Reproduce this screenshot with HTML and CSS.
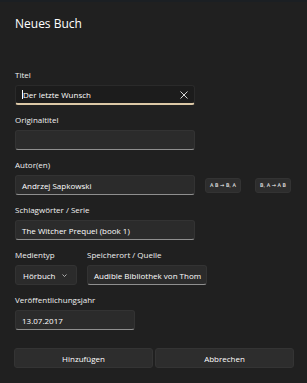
FILE: index.html
```html
<!DOCTYPE html>
<html lang="de">
<head>
    <meta charset="UTF-8">
    <meta name="viewport" content="width=device-width, initial-scale=1.0">
    <title>Neues Buch</title>
    <link rel="stylesheet" href="styles.css">
</head>
<body>

    <div class="dialog">
        <h1>Neues Buch</h1>

        <!-- Eingabefelder -->
        <div class="field first">
            <label>Titel</label>
            <div class="box focused wide">
                <span class="caret"></span>
                <span class="value">Der letzte Wunsch</span>
                <svg class="clear" width="8" height="8" viewBox="0 0 8 8">
                    <path d="M0.5 0.5 L7.5 7.5 M7.5 0.5 L0.5 7.5" stroke="#d6d6d6" stroke-width="1" fill="none"/>
                </svg>
            </div>
        </div>

        <div class="field">
            <label>Originaltitel</label>
            <div class="box wide"></div>
        </div>

        <div class="field">
            <label>Autor(en)</label>
            <div class="row">
                <div class="box wide"><span class="value">Andrzej Sapkowski</span></div>
                <button class="swap first-swap">A B &rarr; B, A</button>
                <button class="swap">B, A &rarr; A B</button>
            </div>
        </div>

        <div class="field">
            <label>Schlagwörter / Serie</label>
            <div class="box wide"><span class="value">The Witcher Prequel (book 1)</span></div>
        </div>

        <div class="row split">
            <div class="field">
                <label>Medientyp</label>
                <div class="combo">
                    <span class="value">Hörbuch</span>
                    <svg width="5" height="3" viewBox="0 0 5 3">
                        <path d="M0.5 0.5 L2.5 2.5 L4.5 0.5" stroke="#cfcfcf" stroke-width="0.8" fill="none"/>
                    </svg>
                </div>
            </div>
            <div class="field">
                <label>Speicherort / Quelle</label>
                <div class="box medium"><span class="value">Audible Bibliothek von Thom</span></div>
            </div>
        </div>

        <div class="field">
            <label>Veröffentlichungsjahr</label>
            <div class="box medium"><span class="value">13.07.2017</span></div>
        </div>

        <div class="actions">
            <button class="action">Hinzufügen</button>
            <button class="action">Abbrechen</button>
        </div>
    </div>

</body>
</html>
```

FILE: styles.css
```css
body {
    margin: 0;
    background-color: #202020;
    font-family: "Open Sans", sans-serif;
    color: #ffffff;
    border-top: 2px solid #1b1f23;
}
.dialog {
    padding: 14px 0 0 15px;
}
h1 {
    margin: 0;
    font-size: 12px;
    font-weight: normal;
    line-height: 16px;
}
.field {
    margin-top: 9px;
}
.field.first {
    margin-top: 37px;
}
label {
    display: block;
    font-size: 8px;
    line-height: 11px;
    margin-bottom: 5px;
    color: #f0f0f0;
}
.box, .combo {
    box-sizing: border-box;
    height: 20px;
    background-color: #2b2b2b;
    border: 1px solid #333333;
    border-bottom: 1px solid #8f8f8f;
    border-radius: 3px;
    display: flex;
    align-items: center;
    padding: 0 6px;
    font-size: 8px;
    overflow: hidden;
    white-space: nowrap;
}
.wide {
    width: 180px;
}
.medium {
    width: 120px;
}
.focused {
    background-color: #1c1c1c;
    border-color: #2a2a2a;
    border-bottom: 2px solid #dcc8a6;
}
.caret {
    width: 1px;
    height: 9px;
    background-color: #ffffff;
}
.focused .value {
    flex: 1;
}
.row {
    display: flex;
    align-items: center;
}
.row.split {
    gap: 10px;
}
.swap {
    box-sizing: border-box;
    width: 36px;
    height: 15px;
    margin-left: 14px;
    padding: 0;
    background-color: #2d2d2d;
    border: 1px solid #333333;
    border-radius: 3px;
    color: #ffffff;
    font-family: "DejaVu Sans", sans-serif;
    font-size: 5px;
}
.swap.first-swap {
    margin-left: 10px;
}
.combo {
    width: 62px;
    border-bottom-color: #333333;
    justify-content: space-between;
    padding: 0 7px;
}
.combo svg {
    margin-right: 2px;
}
.actions {
    display: grid;
    grid-template-columns: 139px 139px;
    gap: 2px;
    margin: 18px 0 0 -1px;
}
.action {
    height: 20px;
    background-color: #2d2d2d;
    border: 1px solid #343434;
    border-radius: 3px;
    color: #ffffff;
    font-family: "Open Sans", sans-serif;
    font-size: 8px;
    padding: 0;
}
```
